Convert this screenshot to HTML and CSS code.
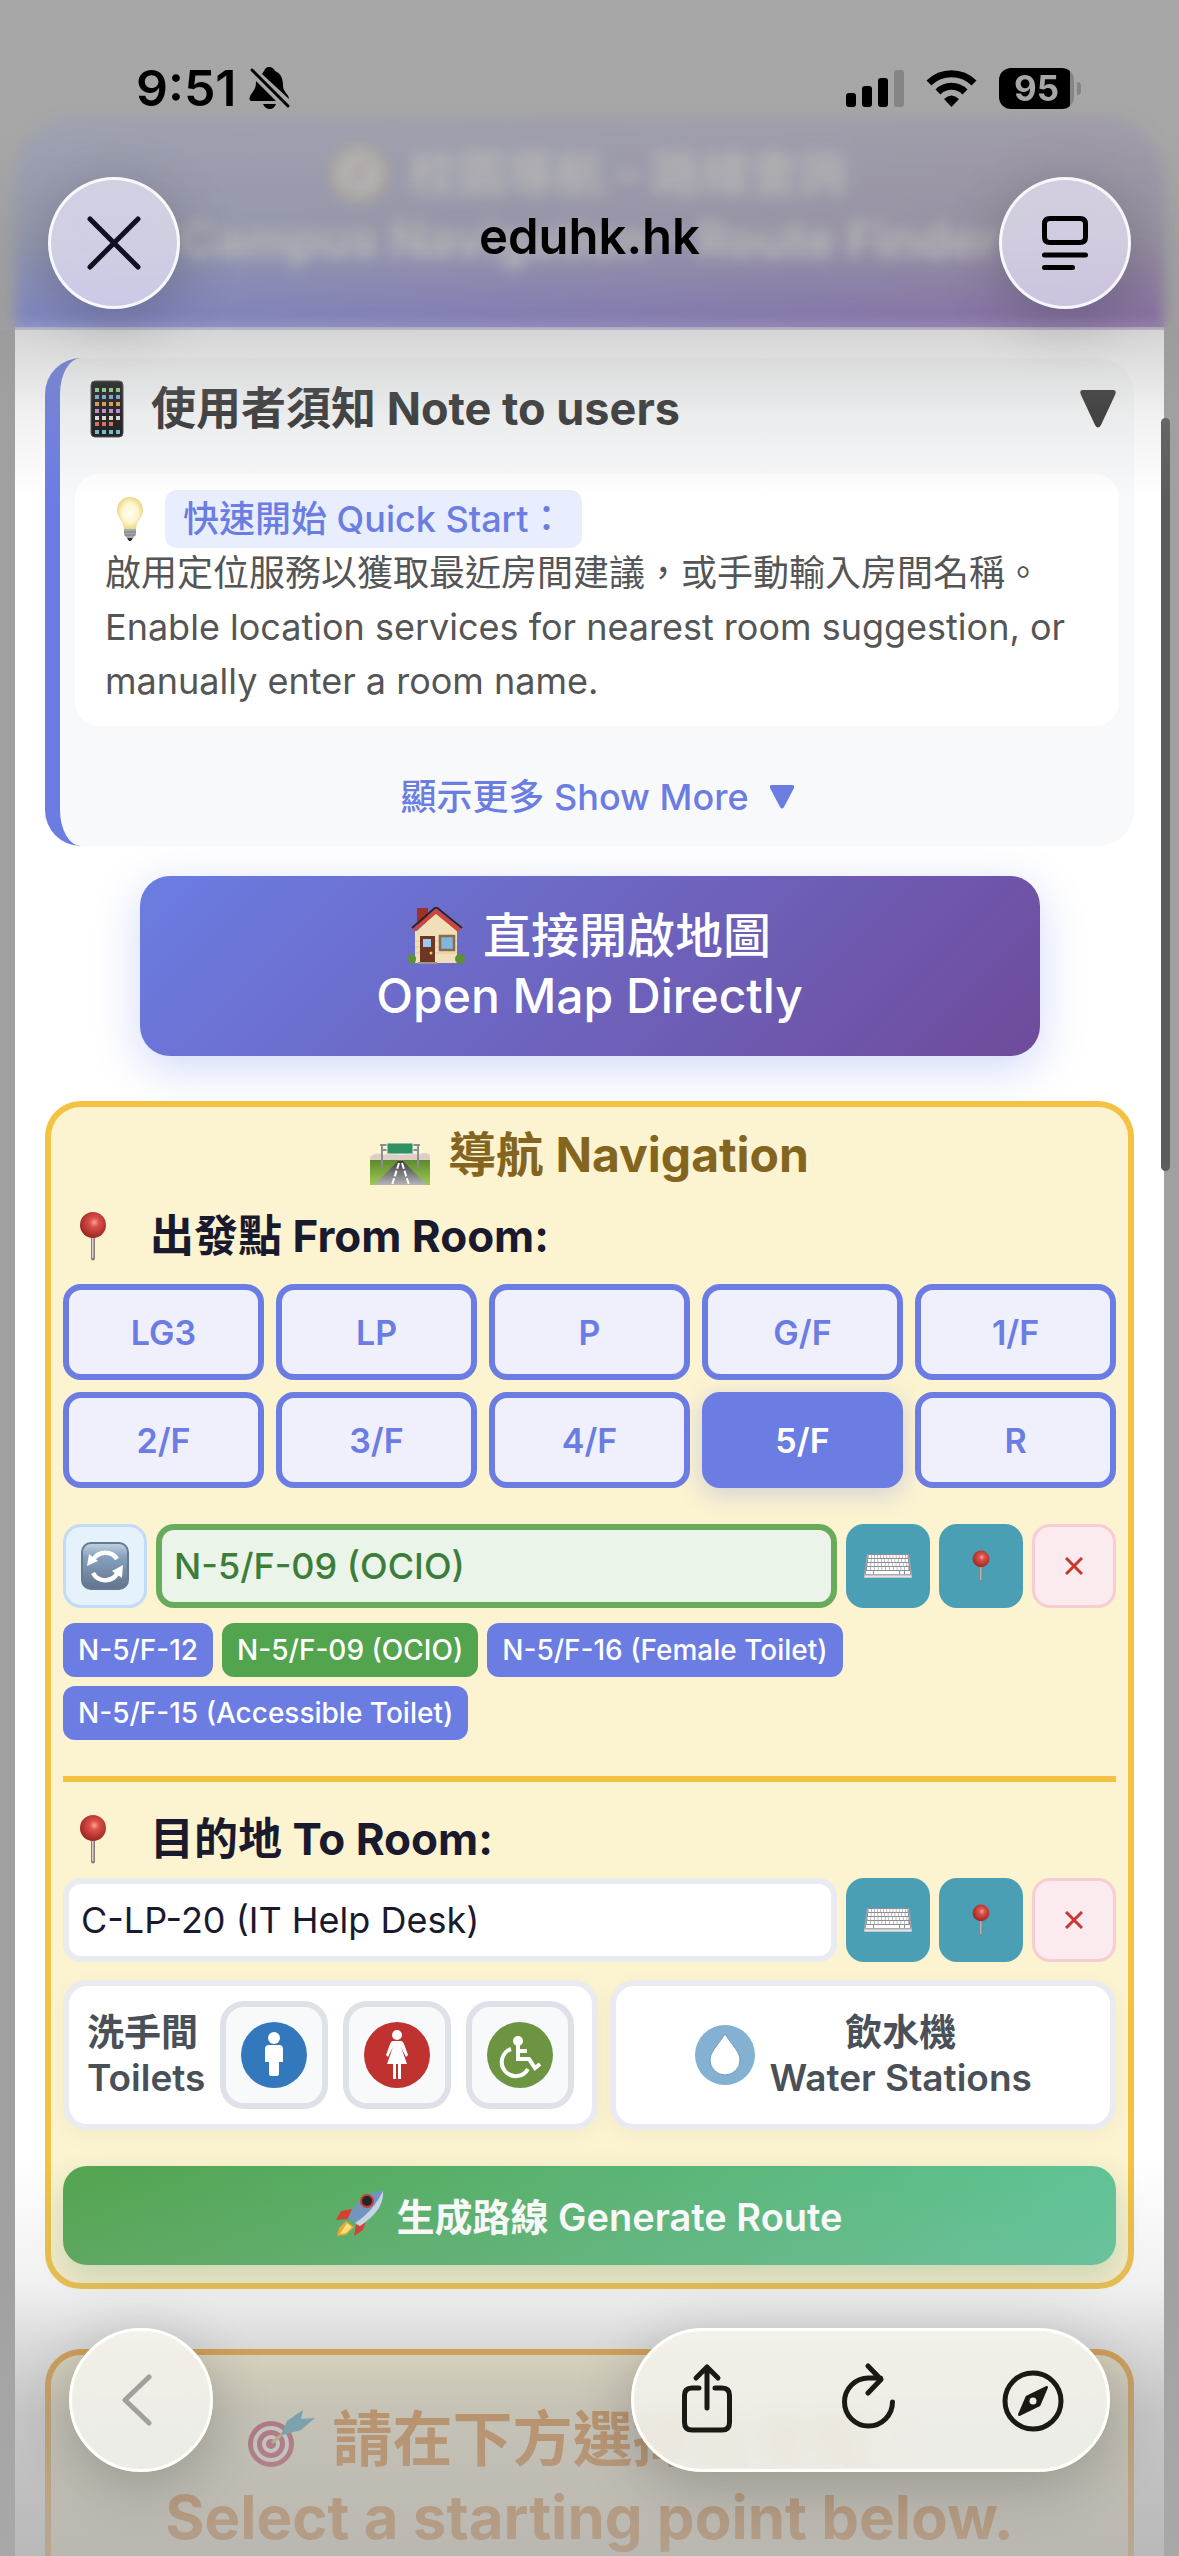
FILE: index.html
```html
<!DOCTYPE html>
<html lang="zh-Hant-HK">
<head>
    <meta charset="UTF-8">
    <meta name="viewport" content="width=device-width, initial-scale=1.0">
    <title>校園導航 – 路線查詢</title>
    <link rel="stylesheet" href="styles.css">
</head>
<body>
    <!-- Shared icons -->
    <svg class="icon-defs" aria-hidden="true">
        <defs>
            <radialGradient id="pinHead" cx="0.55" cy="0.4" r="0.6">
                <stop offset="0" stop-color="#f3a39a"/>
                <stop offset="0.3" stop-color="#dd5048"/>
                <stop offset="1" stop-color="#9c2522"/>
            </radialGradient>
            <linearGradient id="keyBlue" x1="0" y1="0" x2="0" y2="1">
                <stop offset="0" stop-color="#c5d3e0"/>
                <stop offset="0.3" stop-color="#86a1bd"/>
                <stop offset="1" stop-color="#62738d"/>
            </linearGradient>
            <radialGradient id="bulbGlass">
                <stop offset="0" stop-color="#fffef2"/>
                <stop offset="0.6" stop-color="#fdf6cf"/>
                <stop offset="1" stop-color="#ecd98c"/>
            </radialGradient>
            <linearGradient id="grass" x1="0" y1="0" x2="0" y2="1">
                <stop offset="0" stop-color="#5d8a2c"/>
                <stop offset="1" stop-color="#9fc956"/>
            </linearGradient>
            <linearGradient id="road" x1="0" y1="0" x2="0" y2="1">
                <stop offset="0" stop-color="#3c3c40"/>
                <stop offset="1" stop-color="#b5b5b8"/>
            </linearGradient>
        </defs>
        <symbol id="pin" viewBox="0 0 28 50">
            <path d="M12 24h4v24q-2 3-4 0z" fill="#8c7b76"/>
            <path d="M13 26h1.500v21h-1.500z" fill="#d9cfca"/>
            <circle cx="14" cy="14" r="13" fill="url(#pinHead)"/>
        </symbol>
        <symbol id="keyboard" viewBox="0 0 48 26">
            <path d="M3 1h42l3 21v3H0v-3z" fill="#a9abb0"/>
            <path d="M4 1h40l3 20H1z" fill="#8e9095"/>
            <path d="M4.500 3.500h39" stroke="#fff" stroke-width="3" stroke-dasharray="2.500 .6"/>
            <path d="M4 7.500h40" stroke="#fff" stroke-width="3" stroke-dasharray="2.800 .6"/>
            <path d="M3.500 11.500h41" stroke="#fff" stroke-width="3" stroke-dasharray="3 .6"/>
            <path d="M3 15.500h42" stroke="#fff" stroke-width="3" stroke-dasharray="3.200 .6"/>
            <path d="M2 19.500h7M10 19.500h25M36 19.500h4M41 19.500h5" stroke="#fff" stroke-width="3"/>
            <path d="M.5 23.500h47" stroke="#e4e5e8" stroke-width="2"/>
        </symbol>
    </svg>

    <div class="screen">
        <main class="page">
            <header class="hero">
                <h1>
                    <span class="hero-line">
                        <svg class="hero-icon" viewBox="0 0 56 56" aria-hidden="true">
                            <circle cx="28" cy="28" r="25" fill="#fff" stroke="#e0b84a" stroke-width="6"/>
                            <path d="M38 12L31 31l-7-6z" fill="#e0332c"/>
                            <path d="M18 44l6-19 7 6z" fill="#7d8794"/>
                        </svg>
                        校園導航 – 路線查詢
                    </span>
                    <span class="hero-line">Campus Navigation – Route Finder</span>
                </h1>
            </header>

            <div class="content">
                <section class="note">
                    <div class="note-head">
                        <svg class="note-phone" viewBox="0 0 34 58" aria-hidden="true">
                            <rect x="1" y="1" width="32" height="56" rx="4" fill="#141416" stroke="#4a4a4e"/>
                            <g stroke-width="4" stroke-dasharray="4 3">
                                <path d="M5 10h25" stroke="#8fd08a"/>
                                <path d="M5 17h25" stroke="#79a9e0"/>
                                <path d="M5 24h25" stroke="#e0a04d"/>
                                <path d="M5 31h25" stroke="#c78bd6"/>
                                <path d="M5 38h25" stroke="#e8e4d8"/>
                                <path d="M5 44h18" stroke="#e06a5c"/>
                                <path d="M5 52h25" stroke="#6dc0d0"/>
                            </g>
                        </svg>
                        <h2>使用者須知 Note to users</h2>
                        <button class="note-toggle" aria-label="Collapse note">
                            <svg viewBox="0 0 36 38"><path d="M3 0h30q4 0 2 5L21 35q-3 5-6 0L1 5q-2-5 2-5z"/></svg>
                        </button>
                    </div>
                    <div class="quick">
                        <p class="quick-label">
                            <svg class="bulb" viewBox="0 0 48 44" aria-hidden="true">
                                <path d="M25 0c8 0 13 6 13 13 0 8-6 10-7 19H19c-1-9-7-11-7-19C12 6 17 0 25 0z" fill="url(#bulbGlass)"/>
                                <path d="M19 32h12v6l-3 3h-6l-3-3z" fill="#a9a9ad"/>
                                <path d="M19 35h12M20 38h10" stroke="#77777c"/>
                                <path d="M22 41h6l-2 3h-2z" fill="#2c2c30"/>
                            </svg>
                            <strong class="quick-pill">快速開始 Quick Start：</strong>
                        </p>
                        <p>啟用定位服務以獲取最近房間建議，或手動輸入房間名稱。</p>
                        <p>Enable location services for nearest room suggestion, or manually enter a room name.</p>
                    </div>
                    <button class="show-more">
                        顯示更多 Show More
                        <svg viewBox="0 0 24 24" aria-hidden="true"><path d="M2 0h20q3 0 2 3L14 22q-2 3-4 0L0 3q-1-3 2-3z"/></svg>
                    </button>
                </section>

                <button class="open-map">
                    <span class="open-map-line">
                        <svg class="house" viewBox="0 0 57 58" aria-hidden="true">
                            <path d="M9 1h11v16H9z" fill="#9c3327"/>
                            <path d="M9 24L29 5l20 19v32H7V24z" fill="#f0dfb9"/>
                            <path d="M5 22L28 2l25 20-3 3L28 7 6 25z" fill="#d0453a"/>
                            <path d="M4 21L28 0l26 21" fill="none" stroke="#332220" stroke-width="2"/>
                            <path d="M7 34h42M7 40h42M7 46h42" stroke="#ddc99c" stroke-width="1"/>
                            <rect x="12" y="29" width="15" height="26" fill="#6d3625"/>
                            <rect x="15" y="32" width="8" height="8" fill="#9ccbee"/>
                            <circle cx="23" cy="46" r="1.500" fill="#f3c64e"/>
                            <rect x="32" y="29" width="14" height="14" fill="#7fb5df" stroke="#8d6a4a" stroke-width="2.500"/>
                            <path d="M10 55h19v2H10z" fill="#9a948c"/>
                            <ellipse cx="4" cy="52" rx="4" ry="5" fill="#5f8f35"/>
                            <ellipse cx="52" cy="52" rx="5" ry="5" fill="#5f8f35"/>
                        </svg>
                        直接開啟地圖
                    </span>
                    <span class="open-map-line">Open Map Directly</span>
                </button>

                <section class="nav-card">
                    <h2 class="nav-title">
                        <svg class="motorway" viewBox="0 0 60 42" aria-hidden="true">
                            <path d="M0 14q6-6 14-2 8-4 16 0 12-4 18 0 7-4 12 0v6H0z" fill="#e0cdc8"/>
                            <path d="M0 17h60v25H0z" fill="url(#grass)"/>
                            <path d="M28 18h5l24 24H4z" fill="url(#road)"/>
                            <path d="M29 20l-7 22M32 20l7 22" stroke="#fff" stroke-width="2" stroke-dasharray="6 2"/>
                            <path d="M12 1v24M48 1v24M10 2h40M12 7h36" stroke="#8b8f92" stroke-width="2"/>
                            <rect x="17" y="0" width="26" height="11" rx="1" fill="#2f9062" stroke="#e4efe8"/>
                        </svg>
                        導航 Navigation
                    </h2>

                    <form class="nav-form">
                        <label class="room-label room-label-from" for="from-room">
                            <svg class="pin" aria-hidden="true"><use href="#pin"/></svg>
                            出發點 From Room:
                        </label>
                        <div class="floors">
                            <button type="button" class="floor">LG3</button>
                            <button type="button" class="floor">LP</button>
                            <button type="button" class="floor">P</button>
                            <button type="button" class="floor">G/F</button>
                            <button type="button" class="floor">1/F</button>
                            <button type="button" class="floor">2/F</button>
                            <button type="button" class="floor">3/F</button>
                            <button type="button" class="floor">4/F</button>
                            <button type="button" class="floor active">5/F</button>
                            <button type="button" class="floor">R</button>
                        </div>
                        <div class="room-row room-row-from">
                            <button type="button" class="tool tool-refresh" aria-label="Refresh location">
                                <svg width="48" height="48" viewBox="0 0 48 48">
                                    <rect x="1" y="1" width="46" height="46" rx="9" fill="url(#keyBlue)" stroke="#667a92" stroke-width="2"/>
                                    <path d="M12 18a14 14 0 0 1 24-1" fill="none" stroke="#fff" stroke-width="4.500"/>
                                    <path d="M37 30a14 14 0 0 1-25 1" fill="none" stroke="#fff" stroke-width="4.500"/>
                                    <path d="M6 24l2-12 9 7zM42 23l-1 13-10-7z" fill="#fff"/>
                                </svg>
                            </button>
                            <input class="room-input found" id="from-room" type="text" value="N-5/F-09 (OCIO)">
                            <button type="button" class="tool tool-teal" aria-label="Keyboard"><svg width="48" height="26"><use href="#keyboard"/></svg></button>
                            <button type="button" class="tool tool-teal" aria-label="Locate me"><svg width="18" height="34"><use href="#pin"/></svg></button>
                            <button type="button" class="tool tool-clear" aria-label="Clear">
                                <svg width="18" height="18" viewBox="0 0 18 18"><path d="M1 1l16 16M17 1L1 17"/></svg>
                            </button>
                        </div>
                        <div class="chips">
                            <button type="button" class="chip">N-5/F-12</button>
                            <button type="button" class="chip selected">N-5/F-09 (OCIO)</button>
                            <button type="button" class="chip">N-5/F-16 (Female Toilet)</button>
                            <button type="button" class="chip">N-5/F-15 (Accessible Toilet)</button>
                        </div>

                        <hr class="divider">

                        <label class="room-label room-label-to" for="to-room">
                            <svg class="pin" aria-hidden="true"><use href="#pin"/></svg>
                            目的地 To Room:
                        </label>
                        <div class="room-row">
                            <input class="room-input" id="to-room" type="text" value="C-LP-20 (IT Help Desk)">
                            <button type="button" class="tool tool-teal" aria-label="Keyboard"><svg width="48" height="26"><use href="#keyboard"/></svg></button>
                            <button type="button" class="tool tool-teal" aria-label="Locate me"><svg width="18" height="34"><use href="#pin"/></svg></button>
                            <button type="button" class="tool tool-clear" aria-label="Clear">
                                <svg width="18" height="18" viewBox="0 0 18 18"><path d="M1 1l16 16M17 1L1 17"/></svg>
                            </button>
                        </div>

                        <div class="facilities">
                            <div class="facility facility-toilets">
                                <span class="facility-text">洗手間<br>Toilets</span>
                                <button type="button" class="toilet" aria-label="Male toilet">
                                    <svg width="66" height="66" viewBox="0 0 66 66">
                                        <circle cx="33" cy="33" r="33" fill="#3378bd"/>
                                        <circle cx="33" cy="16" r="6" fill="#fff"/>
                                        <path d="M28 23h10q4 0 4 4v13h-4v12q0 2-2 2h-6q-2 0-2-2V40h-4V27q0-4 4-4z" fill="#fff"/>
                                    </svg>
                                </button>
                                <button type="button" class="toilet" aria-label="Female toilet">
                                    <svg width="66" height="66" viewBox="0 0 66 66">
                                        <circle cx="33" cy="33" r="33" fill="#bf322f"/>
                                        <circle cx="33" cy="13" r="5" fill="#fff"/>
                                        <path d="M29 19h8q2 0 3 3l4 11-2 2-5-10 6 17h-6v15h-3V42h-2v15h-3V42h-6l6-17-5 10-2-2 4-11q1-3 3-3z" fill="#fff"/>
                                    </svg>
                                </button>
                                <button type="button" class="toilet" aria-label="Accessible toilet">
                                    <svg width="66" height="66" viewBox="0 0 66 66">
                                        <circle cx="33" cy="33" r="33" fill="#6d9440"/>
                                        <circle cx="31" cy="19" r="5" fill="#fff"/>
                                        <path d="M31 22v15h11l6 9 5-4M32 29h8M24 27a14 14 0 1 0 17 20" fill="none" stroke="#fff" stroke-width="4"/>
                                    </svg>
                                </button>
                            </div>
                            <button type="button" class="facility facility-water">
                                <svg width="60" height="60" viewBox="0 0 60 60" aria-hidden="true">
                                    <circle cx="30" cy="30" r="30" fill="#84b0d1"/>
                                    <path d="M30 9c7 11 15 18 15 26a15 15 0 0 1-30 0c0-8 8-15 15-26z" fill="#fff" stroke="#6f9dc2"/>
                                </svg>
                                <span class="facility-text">飲水機<br>Water Stations</span>
                            </button>
                        </div>

                        <button type="submit" class="generate">
                            <svg width="48" height="46" viewBox="0 0 48 46" aria-hidden="true">
                                <path d="M16 18L5 20 0 29l12-1zM20 34l-2 11 9-6 4-12z" fill="#d8372b"/>
                                <path d="M10 30l8 6-8 8-9 1 2-8z" fill="#f2a52e"/>
                                <path d="M11 32l5 4-6 6-6 1z" fill="#fbe777"/>
                                <path d="M47 0c1 12-6 24-23 35L12 27C20 10 33 0 47 0z" fill="#6f93bf"/>
                                <path d="M47 0c1 12-6 24-23 35l-5-3C32 24 41 12 47 0z" fill="#c9d8e6"/>
                                <circle cx="31" cy="10" r="6" fill="#1d1d22" stroke="#cf3328" stroke-width="2"/>
                            </svg>
                            生成路線 Generate Route
                        </button>
                    </form>
                </section>

                <section class="start-card">
                    <p class="start-line">
                        <svg width="68" height="58" viewBox="0 0 68 58" aria-hidden="true">
                            <circle cx="24" cy="34" r="23" fill="#c01c38"/>
                            <circle cx="24" cy="34" r="18" fill="#fff"/>
                            <circle cx="24" cy="34" r="14" fill="#c01c38"/>
                            <circle cx="24" cy="34" r="9" fill="#fff"/>
                            <circle cx="24" cy="34" r="5" fill="#c01c38"/>
                            <path d="M25 33l16-14" stroke="#d8b23c" stroke-width="3"/>
                            <path d="M34 25l6-14L56 0l-2 9 14-1-14 12-14 4z" fill="#1f95b8"/>
                        </svg>
                        請在下方選擇出發點。
                    </p>
                    <p class="start-line">Select a starting point below.</p>
                </section>
            </div>
        </main>

        <div class="scrollbar"></div>
        <div class="haze-top"></div>
        <div class="haze-header"></div>
        <div class="haze-bottom"></div>

        <div class="browser-top">
            <div class="status">
                <div class="status-left">
                    <span class="clock">9:51</span>
                    <svg width="42" height="44" viewBox="0 0 42 44" aria-hidden="true">
                        <path d="M20 1c3 0 5 2 6 4 7 3 8 9 8 15 0 6 6 8 6 13L13 8l2-3c1-2 2-4 5-4z"/>
                        <path d="M7 15l20 20H4c-6 0-3-5-1-8 3-4 4-6 4-12z"/>
                        <path d="M14 38h13q-2 5-6 5-5 0-7-5z"/>
                        <path d="M3 4l36 36" stroke="#000" stroke-width="3" stroke-linecap="round"/>
                    </svg>
                </div>
                <div class="status-right">
                    <svg width="58" height="38" viewBox="0 0 58 38" aria-hidden="true">
                        <rect x="0" y="24" width="10" height="14" rx="3"/>
                        <rect x="16" y="17" width="10" height="21" rx="3"/>
                        <rect x="32" y="9" width="10" height="29" rx="3"/>
                        <rect x="48" y="1" width="10" height="37" rx="3" fill="#858585"/>
                    </svg>
                    <svg width="51" height="38" viewBox="0 0 51 38" aria-hidden="true">
                        <path d="M3 14a32 32 0 0 1 45 0M12 23a19 19 0 0 1 27 0" fill="none" stroke="#000" stroke-width="7"/>
                        <path d="M18 30q7.500-7 15 0l-7.500 8z"/>
                    </svg>
                    <span class="battery">95</span>
                </div>
            </div>
            <div class="address">
                <button class="glass glass-small" aria-label="Close">
                    <svg width="54" height="54" viewBox="0 0 54 54"><path d="M3 3l48 48M51 3L3 51" fill="none" stroke="#101020" stroke-width="5" stroke-linecap="round"/></svg>
                </button>
                <span class="domain">eduhk.hk</span>
                <button class="glass glass-small" aria-label="Reader">
                    <svg width="46" height="54" viewBox="0 0 46 54"><path d="M8 2.500h30q5.500 0 5.500 5.500v13q0 5.500-5.500 5.500H8q-5.500 0-5.500-5.500V8q0-5.500 5.500-5.500zM2.500 39h41M2.500 51.500h28" fill="none" stroke="#000" stroke-width="5" stroke-linecap="round"/></svg>
                </button>
            </div>
        </div>

        <div class="browser-bottom">
            <button class="glass glass-back" aria-label="Back" disabled>
                <svg width="32" height="52" viewBox="0 0 32 52"><path d="M28 3L4 26l24 23" fill="none" stroke="#a0a09c" stroke-width="5" stroke-linecap="round" stroke-linejoin="round"/></svg>
            </button>
            <div class="glass glass-bar">
                <button class="bar-button" aria-label="Share">
                    <svg width="64" height="74" viewBox="0 0 64 74"><path d="M24 25h-7q-7.500 0-7.500 7.500v27q0 7.500 7.500 7.500h30q7.500 0 7.500-7.500v-27q0-7.500-7.500-7.500h-7M32 45V4M21 15L32 4l11 11"/></svg>
                </button>
                <button class="bar-button" aria-label="Reload">
                    <svg width="64" height="74" viewBox="0 0 64 74"><path d="M53.500 39a24 24 0 1 1-24-24h12M29 3l13 13.500L29 30"/></svg>
                </button>
                <button class="bar-button" aria-label="Open in browser">
                    <svg width="64" height="74" viewBox="0 0 64 74"><circle cx="31" cy="38" r="28"/><path d="M44.500 24.500L25 34l-7.500 17.500L37 42z" fill="#1a1914" stroke-width="3"/><circle cx="31" cy="38" r="3.500" fill="#eee" stroke="none"/></svg>
                </button>
            </div>
        </div>
    </div>
</body>
</html>
```
FILE: styles.css
```css
* {
    box-sizing: border-box;
    margin: 0;
    padding: 0;
}

body {
    font-family: Inter, "Noto Sans CJK TC", sans-serif;
    font-size: 36px;
    background-color: #a0a0a0;
    color: #1a1a2e;
}

button,
input {
    font: inherit;
    color: inherit;
    border: none;
    background: none;
}

button {
    cursor: pointer;
}

svg {
    display: block;
    flex: none;
}

.icon-defs {
    position: absolute;
    width: 0;
    height: 0;
}

.screen {
    position: relative;
    height: 100vh;
    overflow: hidden;
}

.page {
    margin: 117px 15px 0;
    background-color: #fff;
    border-radius: 60px 60px 0 0;
    overflow: hidden;
}

/* Page header */
.hero {
    padding: 24px 30px 54px;
    background: linear-gradient(135deg, #667eea, #764ba2);
    color: #fff;
    text-align: center;
}

.hero h1 {
    font-size: 49px;
    line-height: 66px;
}

.hero-line {
    display: flex;
    justify-content: center;
    align-items: center;
    gap: 21px;
    white-space: nowrap;
}

.hero-icon {
    width: 56px;
    height: 56px;
}

.content {
    padding: 31px 30px 0;
}

/* Note to users */
.note {
    padding: 18px 15px 0;
    background-color: #f8f9fa;
    border-left: 15px solid #6b7de3;
    border-radius: 36px;
}

.note-head {
    display: flex;
    align-items: center;
    gap: 27px;
    padding: 0 3px 0 15px;
    margin-bottom: 32px;
    color: #333;
}

.note-head h2 {
    flex: 1;
    font-size: 45px;
    line-height: 66px;
}

.note-phone {
    width: 34px;
    height: 58px;
}

.note-toggle svg {
    width: 36px;
    height: 38px;
    fill: #333;
}

.quick {
    padding: 18px 30px;
    background-color: #fff;
    border-radius: 24px;
    color: #555;
    line-height: 54px;
}

.quick-label {
    display: flex;
    align-items: center;
    gap: 12px;
    height: 54px;
}

.bulb {
    width: 48px;
    height: 44px;
}

.quick-pill {
    padding: 2px 18px;
    background-color: #e8eefd;
    border-radius: 12px;
    color: #6b7de3;
    font-weight: 500;
}

.show-more {
    display: flex;
    justify-content: center;
    align-items: center;
    gap: 21px;
    width: 100%;
    margin-top: 22px;
    color: #6b7de3;
    font-weight: 500;
    line-height: 98px;
}

.show-more svg {
    width: 24px;
    height: 24px;
    fill: #6b7de3;
}

/* Open map */
.open-map {
    display: block;
    width: calc(100% - 189px);
    margin: 30px auto 45px;
    padding: 30px;
    background: linear-gradient(135deg, #6b7de3, #6f4b9b);
    border-radius: 30px;
    box-shadow: 0 12px 45px rgba(102, 126, 234, 0.3);
    color: #fff;
    font-size: 48px;
    font-weight: 500;
    line-height: 60px;
}

.open-map-line {
    display: flex;
    justify-content: center;
    align-items: center;
    gap: 18px;
}

.house {
    width: 57px;
    height: 58px;
}

/* Navigation */
.nav-card {
    padding: 18px 12px;
    background-color: #fcf3d0;
    border: 6px solid #f4c242;
    border-radius: 36px;
}

.nav-title {
    display: flex;
    justify-content: center;
    align-items: center;
    gap: 18px;
    color: #84651f;
    font-size: 48px;
    line-height: 60px;
}

.motorway {
    width: 60px;
    height: 42px;
    margin-top: 18px;
}

.room-label {
    display: flex;
    align-items: center;
    gap: 27px;
    font-size: 44px;
    font-weight: 700;
    line-height: 60px;
}

.room-label-from {
    margin: 21px 0 18px;
}

.room-label-to {
    margin: 27px 0 9px;
}

.pin {
    width: 60px;
    height: 50px;
}

.floors {
    display: grid;
    grid-template-columns: repeat(5, 1fr);
    gap: 12px;
}

.floor {
    height: 96px;
    background-color: #f0f0fd;
    border: 6px solid #6b7de3;
    border-radius: 18px;
    color: #6b7de3;
    font-size: 34px;
    font-weight: 600;
}

.floor.active {
    background-color: #6b7de3;
    box-shadow: 0 6px 24px rgba(102, 126, 234, 0.3);
    color: #fff;
}

.room-row {
    display: flex;
    gap: 9px;
    height: 84px;
}

.room-row-from {
    margin-top: 36px;
}

.room-input {
    flex: 1;
    min-width: 0;
    padding: 0 12px;
    background-color: #fff;
    border: 6px solid #e9ebf0;
    border-radius: 18px;
    font-size: 36px;
}

.room-input.found {
    background-color: #eaf4e8;
    border-color: #68ac5b;
    color: #3d7d3b;
    font-weight: 500;
}

.tool {
    display: flex;
    justify-content: center;
    align-items: center;
    flex: none;
    width: 84px;
    border-radius: 18px;
}

.tool-refresh {
    background-color: #e5f1fb;
    border: 3px solid #c1dcf8;
}

.tool-teal {
    background-color: #4a9fb5;
}

.tool-clear {
    background-color: #fcebee;
    border: 3px solid #f7cdd3;
}

.tool-clear path {
    stroke: #c7372f;
    stroke-width: 3;
}

.chips {
    display: flex;
    flex-wrap: wrap;
    gap: 9px;
    margin-top: 15px;
}

.chip {
    height: 54px;
    padding: 0 15px;
    background-color: #6b7de3;
    border-radius: 12px;
    color: #fff;
    font-size: 28px;
    font-weight: 500;
}

.chip.selected {
    background-color: #52a44e;
}

.divider {
    height: 6px;
    margin-top: 36px;
    background-color: #f4c242;
    border: none;
}

/* Toilets and water stations */
.facilities {
    display: flex;
    gap: 12px;
    margin-top: 18px;
}

.facility {
    display: flex;
    justify-content: center;
    align-items: center;
    gap: 15px;
    height: 150px;
    padding: 0 18px;
    background-color: #fff;
    border: 6px solid #e9ebf0;
    border-radius: 24px;
    box-shadow: 0 6px 24px rgba(0, 0, 0, 0.04);
    color: #495057;
    font-size: 37px;
    font-weight: 600;
    line-height: 45px;
}

.facility-water {
    flex: 1;
}

.toilet {
    display: flex;
    justify-content: center;
    align-items: center;
    width: 108px;
    height: 108px;
    background-color: #f8f9fa;
    border: 6px solid #dee2e8;
    border-radius: 24px;
}

.generate {
    display: flex;
    justify-content: center;
    align-items: center;
    gap: 12px;
    width: 100%;
    height: 99px;
    margin-top: 36px;
    padding-bottom: 3px;
    background: linear-gradient(135deg, #52a44e, #60c69b);
    border-radius: 24px;
    box-shadow: 0 12px 30px rgba(40, 140, 70, 0.2);
    color: #fff;
    font-size: 38px;
    font-weight: 600;
}

/* Start prompt */
.start-card {
    margin-top: 60px;
    padding: 45px 12px 60px;
    background-color: #fcf3d0;
    border: 6px solid #f09a18;
    border-radius: 36px;
    color: #d86a00;
    font-size: 60px;
    font-weight: 700;
    line-height: 78px;
}

.start-line {
    display: flex;
    justify-content: center;
    align-items: center;
    gap: 18px;
    white-space: nowrap;
}

/* Browser chrome floating over the page */
.scrollbar {
    position: absolute;
    top: 418px;
    right: 9px;
    width: 9px;
    height: 753px;
    background-color: #5c5c5c;
    border-radius: 5px;
}

.haze-top,
.haze-header,
.haze-bottom,
.browser-top,
.browser-bottom {
    position: absolute;
    left: 0;
    right: 0;
}

.haze-header {
    top: 0;
    height: 330px;
    background: linear-gradient(rgba(167, 167, 167, 0.86) 40%, rgba(160, 160, 160, 0.8) 72%, rgba(155, 155, 155, 0.4));
    backdrop-filter: blur(7px);
}

.haze-top {
    top: 330px;
    height: 170px;
    background: linear-gradient(rgba(150, 150, 150, 0.4), rgba(160, 160, 160, 0.15) 50%, rgba(170, 170, 170, 0));
}

.haze-bottom {
    bottom: 0;
    height: 400px;
    background: linear-gradient(rgba(168, 168, 168, 0), rgba(168, 168, 168, 0.16) 32%, rgba(168, 168, 168, 0.44) 48%, rgba(168, 168, 168, 0.66) 64%, rgba(170, 170, 170, 0.82));
}

.browser-top {
    top: 0;
    color: #000;
}

.status {
    display: flex;
    justify-content: space-between;
    align-items: center;
    height: 60px;
    margin-top: 58px;
    padding: 0 98px 0 136px;
}

.status-left,
.status-right {
    display: flex;
    align-items: center;
}

.status-left {
    gap: 12px;
}

.status-right {
    gap: 22px;
}

.clock {
    font-size: 50px;
    font-weight: 600;
    line-height: 60px;
}

.battery {
    position: relative;
    width: 75px;
    height: 41px;
    margin-right: 7px;
    background: linear-gradient(90deg, #000 71px, #858585 71px);
    border-radius: 12px;
    color: #a7a7a7;
    font-size: 35px;
    font-weight: 700;
    line-height: 41px;
    text-align: center;
}

.battery::after {
    content: "";
    position: absolute;
    top: 14px;
    right: -7px;
    width: 4px;
    height: 13px;
    background-color: #858585;
    border-radius: 0 4px 4px 0;
}

.address {
    display: flex;
    justify-content: space-between;
    align-items: center;
    margin-top: 59px;
    padding: 0 48px;
}

.domain {
    padding-bottom: 12px;
    font-size: 49px;
    font-weight: 600;
    line-height: 60px;
}

.glass {
    display: flex;
    justify-content: center;
    align-items: center;
    border: 3px solid rgba(255, 255, 255, 0.85);
    background-color: rgba(240, 236, 255, 0.65);
    box-shadow: 0 12px 60px rgba(0, 0, 0, 0.22);
    backdrop-filter: blur(12px);
}

.glass-small {
    width: 132px;
    height: 132px;
    border-radius: 66px;
}

.browser-bottom {
    bottom: 84px;
    display: flex;
    justify-content: space-between;
    padding: 0 69px;
}

.glass-back,
.glass-bar {
    height: 144px;
    border-color: #fffffb;
    border-radius: 72px;
    background-color: rgba(246, 246, 242, 0.82);
}

.glass-back {
    width: 144px;
    padding-right: 9px;
}

.glass-bar {
    justify-content: space-between;
    width: 479px;
    padding: 0 41px;
}

.bar-button svg {
    fill: none;
    stroke: #1a1914;
    stroke-width: 5;
    stroke-linecap: round;
    stroke-linejoin: round;
}
```
